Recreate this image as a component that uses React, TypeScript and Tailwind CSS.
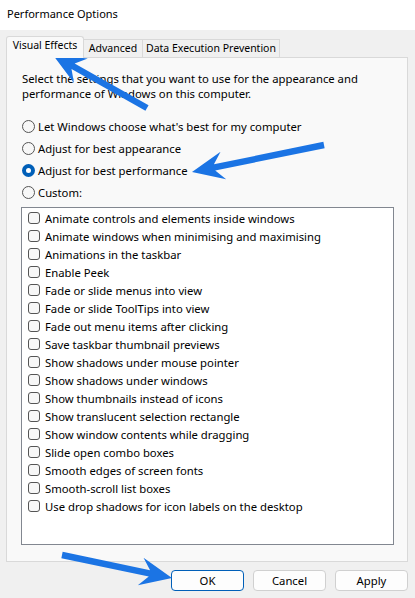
import React from 'react';

const effects = [
  'Animate controls and elements inside windows',
  'Animate windows when minimising and maximising',
  'Animations in the taskbar',
  'Enable Peek',
  'Fade or slide menus into view',
  'Fade or slide ToolTips into view',
  'Fade out menu items after clicking',
  'Save taskbar thumbnail previews',
  'Show shadows under mouse pointer',
  'Show shadows under windows',
  'Show thumbnails instead of icons',
  'Show translucent selection rectangle',
  'Show window contents while dragging',
  'Slide open combo boxes',
  'Smooth edges of screen fonts',
  'Smooth-scroll list boxes',
  'Use drop shadows for icon labels on the desktop',
];

const options = [
  { label: "Let Windows choose what's best for my computer", checked: false },
  { label: 'Adjust for best appearance', checked: false },
  { label: 'Adjust for best performance', checked: true },
  { label: 'Custom:', checked: false },
];

function arrowPoints(x1: number, y1: number, x2: number, y2: number) {
  const dx = x2 - x1;
  const dy = y2 - y1;
  const len = Math.hypot(dx, dy);
  const ux = dx / len;
  const uy = dy / len;
  const nx = -uy;
  const ny = ux;
  const w = 3.2;
  const head = 32;
  const half = 14;
  const bx = x2 - ux * head;
  const by = y2 - uy * head;
  const kx = x2 - ux * head * 0.72;
  const ky = y2 - uy * head * 0.72;
  const pts = [
    [x1 + nx * w, y1 + ny * w],
    [kx + nx * w, ky + ny * w],
    [bx + nx * half, by + ny * half],
    [x2, y2],
    [bx - nx * half, by - ny * half],
    [kx - nx * w, ky - ny * w],
    [x1 - nx * w, y1 - ny * w],
  ];
  return pts.map((p) => p.join(',')).join(' ');
}

function Radio({ checked }: { checked: boolean }) {
  if (checked) {
    return (
      <span className="w-[13px] h-[13px] rounded-full bg-[#005fb8] flex items-center justify-center shrink-0">
        <span className="w-[5px] h-[5px] rounded-full bg-white" />
      </span>
    );
  }
  return <span className="w-[13px] h-[13px] rounded-full border border-[#555] bg-[#f7f7f7] shrink-0" />;
}

export default function App() {
  return (
    <div className="relative w-[415px] h-[598px] overflow-hidden bg-[#f0f0f0] text-[11.3px] text-black font-['Segoe_UI','Noto_Sans',sans-serif] leading-[15px]">
      {/* Title bar */}
      <div className="h-[30px] bg-white pl-[7px] pt-[6px] text-[11px]">Performance Options</div>

      {/* Tabs */}
      <div className="flex items-end ml-[6px] mt-[6px] h-[21px] text-[10.5px]">
        <div className="relative z-10 -mb-px w-[78px] h-[22px] pt-[1px] text-center bg-[#f9f9f9] border border-b-0 border-[#d9d9d9] rounded-t-[3px]">
          Visual Effects
        </div>
        <div className="w-[59px] h-[18px] pt-[1px] text-center border border-b-0 border-l-0 border-[#d9d9d9]">Advanced</div>
        <div className="w-[137px] h-[18px] pt-[1px] text-center border border-b-0 border-l-0 border-[#d9d9d9]">
          Data Execution Prevention
        </div>
      </div>

      {/* Panel */}
      <div className="ml-[6px] w-[402px] h-[505px] bg-[#f9f9f9] border border-[#d9d9d9] pt-[13px]">
        <p className="pl-[15px]">
          Select the settings that you want to use for the appearance and
          <br />
          performance of Windows on this computer.
        </p>

        <div className="flex flex-col gap-[7px] pl-[15px] mt-[18px]">
          {options.map((o) => (
            <div key={o.label} className="flex items-center gap-[3px] h-[15px]">
              <Radio checked={o.checked} />
              <span>{o.label}</span>
            </div>
          ))}
        </div>

        <div className="ml-[14px] mt-[7px] w-[373px] h-[338px] bg-white border border-[#828790] pt-[1px] pl-[6px]">
          {effects.map((e) => (
            <div key={e} className="flex items-center gap-[5px] h-[18px]">
              <span className="w-[12px] h-[12px] rounded-[3px] border border-[#555] bg-[#f7f7f7] shrink-0" />
              <span>{e}</span>
            </div>
          ))}
        </div>
      </div>

      {/* Buttons */}
      <div className="flex justify-end gap-[9px] pr-[7px] mt-[8px]">
        <button className="w-[73px] h-[21px] rounded-[4px] bg-[#fdfdfd] border border-[#005fb8]">OK</button>
        <button className="w-[73px] h-[21px] rounded-[4px] bg-[#fdfdfd] border border-[#d0d0d0]">Cancel</button>
        <button className="w-[73px] h-[21px] rounded-[4px] bg-[#fdfdfd] border border-[#d0d0d0]">Apply</button>
      </div>

      {/* Annotation arrows */}
      <svg className="absolute inset-0 pointer-events-none" width="415" height="598">
        <polygon points={arrowPoints(147, 108, 53, 55)} fill="#1b74e4" />
        <polygon points={arrowPoints(324, 145, 192, 172)} fill="#1b74e4" />
        <polygon points={arrowPoints(62, 555, 172, 578)} fill="#1b74e4" />
      </svg>
    </div>
  );
}
